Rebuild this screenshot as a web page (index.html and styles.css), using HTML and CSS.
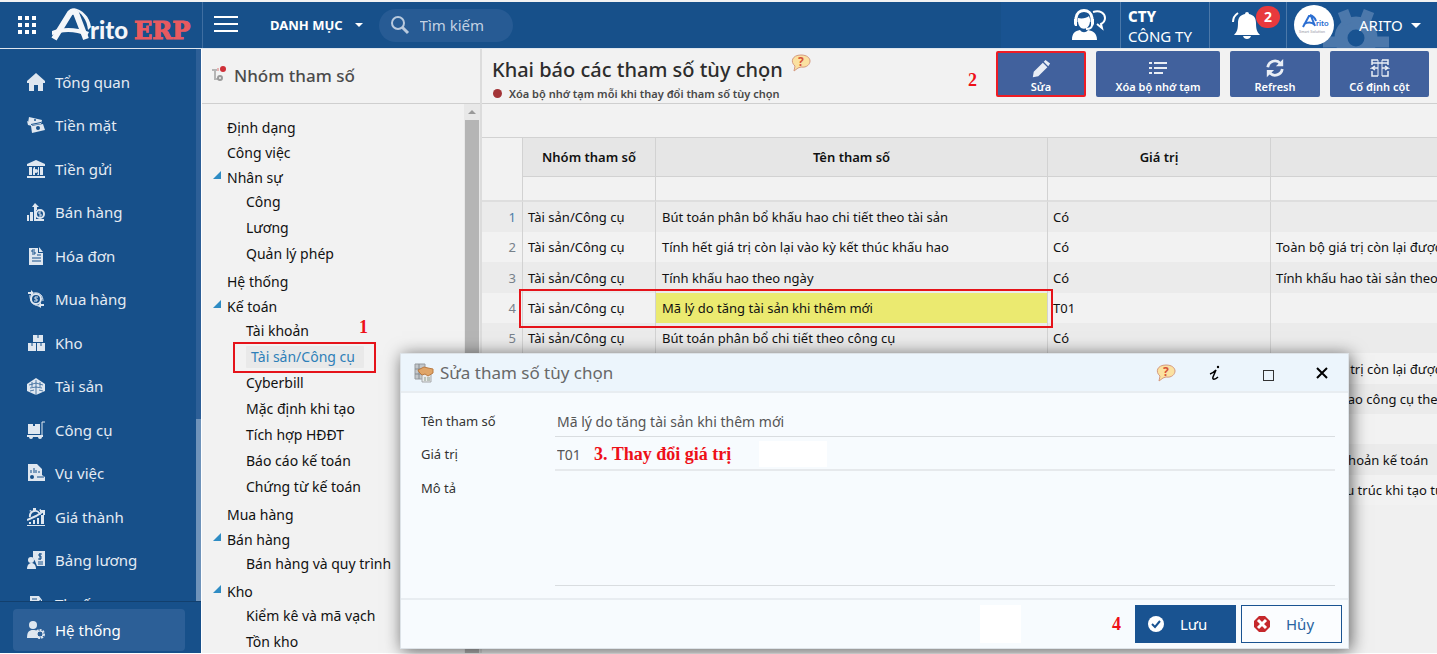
FILE: index.html
```html
<!DOCTYPE html>
<html lang="vi">
<head>
<meta charset="utf-8">
<meta name="viewport" content="width=device-width, initial-scale=1">
<title>Arito ERP</title>
<link rel="stylesheet" href="styles.css">
</head>
<body>
<div class="app">
  <header class="topbar">
    <div class="brand">
      <button class="icon-btn" aria-label="Ứng dụng">
        <svg width="20" height="20" viewBox="0 0 20 20" fill="#fff"><path d="M1 1h4v4H1zM8 1h4v4H8zM15 1h4v4h-4zM1 8h4v4H1zM8 8h4v4H8zM15 8h4v4h-4zM1 15h4v4H1zM8 15h4v4H8zM15 15h4v4h-4z"/></svg>
      </button>
      <svg class="logo" width="142" height="36" viewBox="0 0 142 36" role="img" aria-label="Arito ERP">
        <path d="M3 32L19 6q3-3 6 0l10 26" fill="none" stroke="#f4f6f9" stroke-width="6"/>
        <path d="M1 24c10-4 24-4 37 1l-2 4c-12-5-24-5-35-1zM22 1c9 1 17 9 18 19l-3 3C36 13 31 6 22 1z" fill="#f4f6f9"/>
        <text x="39" y="32" class="logo-rito">rito</text>
        <text x="83" y="32" class="logo-erp">ERP</text>
      </svg>
    </div>
    <button class="icon-btn burger" aria-label="Thu gọn menu">
      <svg width="26" height="20" viewBox="0 0 26 20" stroke="#fff" stroke-width="2"><path d="M1 2h24M1 9h24M1 16h24"/></svg>
    </button>
    <button class="menu-btn">DANH MỤC <span class="caret"></span></button>
    <label class="search">
      <svg width="20" height="20" viewBox="0 0 20 20" fill="none" stroke="#b9cade" stroke-width="2"><circle cx="8" cy="8" r="6"/><path d="M12 12l6 6" stroke-width="3"/></svg>
      <input type="text" placeholder="Tìm kiếm" aria-label="Tìm kiếm">
    </label>
    <div class="top-right">
      <button class="top-cell support" aria-label="Hỗ trợ">
        <svg width="36" height="32" viewBox="0 0 36 32"><path d="M22 3c7-2 12 1 12 6 0 3-2 5-4 6l1 4-5-4" fill="none" stroke="#fff" stroke-width="2"/><path d="M5 13V9C6-1 20-1 21 9v4" fill="none" stroke="#fff" stroke-width="3"/><path d="M3 10h3v7H4l-1-2zM20 10h3v5l-1 2h-2z" fill="#fff"/><path d="M7 9c4 1 9 0 11-2l1 3c1 13-13 13-12 0z" fill="#fff"/><path d="M21 16c0 3-3 4-6 4" fill="none" stroke="#fff" stroke-width="2"/><path d="M1 31c0-7 3-9 8-10 2 3 6 3 8 0 5 1 9 3 9 10z" fill="#fff"/></svg>
      </button>
      <button class="top-cell company"><b>CTY</b><span>CÔNG TY</span></button>
      <button class="top-cell bell" aria-label="Thông báo">
        <svg width="30" height="32" viewBox="0 0 30 32" fill="#fff"><path d="M15 3a2 2 0 0 1 2 2c5 1 7 4 7 9 0 6 1 9 4 12H2c3-3 4-6 4-12 0-5 2-8 7-9a2 2 0 0 1 2-2zM11 27h8c-1 4-7 4-8 0z"/><path d="M1 13c0-4 2-7 5-9" fill="none" stroke="#fff" stroke-width="2"/></svg>
        <span class="badge">2</span>
      </button>
      <button class="top-cell account">
        <svg class="gear" width="68" height="40" viewBox="0 0 68 40"><g fill="none" stroke="#4c78ab"><circle cx="33" cy="30" r="15" stroke-width="13"/><path d="M20 3l5 13M46 3l-5 13M0 34h14M52 34h14" stroke-width="11"/></g></svg>
        <svg class="avatar" width="40" height="40" viewBox="0 0 40 40"><circle cx="20" cy="20" r="20" fill="#fff"/><path d="M9 22l6-11h2l4 10M10 19c4-2 8-2 11 1M16 10c3 1 5 3 6 6" stroke="#2c6fd2" stroke-width="2" fill="none"/><text x="22" y="21" class="avatar-name">rito</text><text x="5" y="28" class="avatar-tag">Smart Solution</text></svg>
        <span class="account-name">ARITO</span><span class="caret caret-lg"></span>
      </button>
    </div>
  </header>

  <div class="body">
    <aside class="sidebar">
      <nav class="side-scroll">
        <a class="side-item" href="#"><svg viewBox="0 0 18 18"><path d="M9 0l9 8v2h-2v8h-5v-6H7v6H2v-8H0V8z"/></svg>Tổng quan</a>
        <a class="side-item" href="#"><svg viewBox="0 0 18 18"><path d="M2 1l13 3-1 4-9 1-4-2z"/><path d="M0 5l4 2 2-1-1 4-4-1zM4 10l12-2 2 6-13 3z"/><g fill="#17508a"><circle cx="8" cy="4" r="1"/><circle cx="11" cy="12" r="2"/><path d="M4 8l10-2v1L4 9z"/></g></svg>Tiền mặt</a>
        <a class="side-item" href="#"><svg viewBox="0 0 18 18"><path d="M9 0l9 4v2H0V4zM2 7h3v8H2zM13 7h3v8h-3zM0 16h18v2H0zM7 7h1v8H6V9zM11 7h1v8h-2l1-2z"/><circle cx="9" cy="11" r="2"/></svg>Tiền gửi</a>
        <a class="side-item" href="#"><svg viewBox="0 0 18 18"><path d="M0 12h2v6H0zM3 9h3v9H3zM7 6h2v12H7zM8 0l4 4h-2v3H7V4H5z"/><circle cx="13" cy="11" r="4" class="ln"/><path d="M14 9h-2v2h2v2h-2" class="ln1"/><path d="M9 16h8v2H9z"/></svg>Bán hàng</a>
        <a class="side-item" href="#"><svg viewBox="0 0 18 18"><path d="M2 1h9v5h5v12H2zM12 0l4 5h-4z"/><path d="M8 3H5v2h3v2H5M10 8h4M5 11h9M5 14h9" fill="none" stroke="#17508a"/></svg>Hóa đơn</a>
        <a class="side-item" href="#"><svg viewBox="0 0 18 18"><circle cx="9" cy="9" r="5" class="ln"/><path d="M11 7H8v2h2v2H7" class="ln1"/><path d="M1 2h3V0l3 3-3 3V4H1zM17 14h-3v-2l-3 4 3 2v-2h3z"/><path d="M3 5c0 6 2 10 9 11M7 3c6-1 9 3 9 8" class="ln1"/></svg>Mua hàng</a>
        <a class="side-item" href="#"><svg viewBox="0 0 18 18"><path d="M6 1h10v7H6zM1 9h8v8H1zM10 9h8v8h-8z"/><path d="M11 1v3M5 9v3M14 9v3" stroke="#17508a"/></svg>Kho</a>
        <a class="side-item" href="#"><svg viewBox="0 0 18 18"><path d="M9 1l6 4 3 2v7l-9 4-9-4V7l3-2z"/><path d="M2 8l7-2 7 2M3 11l6-1 6 1M9 3v15M3 14l4-1M12 13l4 1M5 5v5M13 5v5" fill="none" stroke="#17508a" stroke-opacity=".7"/></svg>Tài sản</a>
        <a class="side-item" href="#"><svg viewBox="0 0 18 18"><path d="M1 3h5v2h2V3h5v10H1zM0 14h16v2H0z"/><path d="M18 1h-3v14" class="ln1"/><circle cx="4" cy="16" r="2"/><circle cx="13" cy="16" r="2"/></svg>Công cụ</a>
        <a class="side-item" href="#"><svg viewBox="0 0 18 18"><path d="M1 0h9l5 5v6l3 2v4H1z"/><path d="M4 9V6M7 9V4M9 9V6M12 9V7M10 13h7" stroke="#17508a"/><circle cx="5" cy="13" r="2" fill="#17508a"/></svg>Vụ việc</a>
        <a class="side-item" href="#"><svg viewBox="0 0 18 18"><path d="M2 14h2v2H2zM6 12h2v4H6zM10 10h2v6h-2zM14 7h3v9h-3zM0 17h18v1H0z"/><path d="M3 9a5 5 0 0 1 10-2M0 12l9-4 8-5M13 3h4v4" class="ln"/><path d="M6 0h3v3H6zM2 3l2-1 1 2zM12 2l2-1v3z"/></svg>Giá thành</a>
        <a class="side-item" href="#"><svg viewBox="0 0 18 18"><path d="M6 0h12v15h-8l-2-5-2-3z"/><circle cx="4" cy="9" r="3"/><path d="M0 18c0-8 9-8 9 0z"/><path d="M13 2v7M15 3h-3v2h2v3h-3M11 11h5M11 13h5" fill="none" stroke="#17508a"/></svg>Bảng lương</a>
        <a class="side-item" href="#"><svg viewBox="0 0 18 18"><path d="M3 1h9l3 4v12H3z"/><path d="M5 4h5M5 7h3M8 9l6-4" stroke="#17508a"/></svg>Thuế</a>
        <span class="side-track"><span class="side-thumb"></span></span>
      </nav>
      <div class="side-footer">
        <a class="side-item side-active" href="#"><svg viewBox="0 0 18 18"><circle cx="6" cy="4" r="4"/><path d="M0 17c0-6 2-8 6-8s5 1 6 3v5z"/><circle cx="13" cy="13" r="3" class="ln-gear"/><circle cx="13" cy="13" r="4" fill="none" stroke="#dfe7f0" stroke-width="2" stroke-dasharray="2 1"/></svg>Hệ thống</a>
      </div>
    </aside>

    <section class="tree-panel">
      <h2 class="tree-title">
        <svg width="18" height="18" viewBox="0 0 18 18"><path d="M1 4h5M4 4v9h4" fill="none" stroke="#b5b5b5" stroke-width="2"/><circle cx="9" cy="12" r="2" fill="none" stroke="#999" stroke-width="2"/><circle cx="12" cy="3" r="3" fill="#cf3038"/><path d="M7 2v3" stroke="#d77"/></svg>
        Nhóm tham số
      </h2>
      <div class="tree-body">
        <ul class="tree">
          <li><a href="#">Định dạng</a></li>
          <li><a href="#">Công việc</a></li>
          <li class="open"><a href="#">Nhân sự</a>
            <ul><li><a href="#">Công</a></li><li><a href="#">Lương</a></li><li><a href="#">Quản lý phép</a></li></ul></li>
          <li><a href="#">Hệ thống</a></li>
          <li class="open"><a href="#">Kế toán</a>
            <ul><li><a href="#">Tài khoản</a></li>
              <li class="picked"><a href="#">Tài sản/Công cụ</a><span class="mark mark-tree"></span><span class="step step-1">1</span></li>
              <li><a href="#">Cyberbill</a></li><li><a href="#">Mặc định khi tạo</a></li><li><a href="#">Tích hợp HĐĐT</a></li><li><a href="#">Báo cáo kế toán</a></li><li><a href="#">Chứng từ kế toán</a></li></ul></li>
          <li><a href="#">Mua hàng</a></li>
          <li class="open"><a href="#">Bán hàng</a>
            <ul><li><a href="#">Bán hàng và quy trình</a></li></ul></li>
          <li class="open"><a href="#">Kho</a>
            <ul><li><a href="#">Kiểm kê và mã vạch</a></li><li><a href="#">Tồn kho</a></li></ul></li>
        </ul>
        <div class="tree-bar"><span class="tree-up"></span><span class="tree-thumb"></span></div>
      </div>
    </section>

    <main class="main">
      <div class="main-head">
        <div class="heading">
          <h1>Khai báo các tham số tùy chọn
            <svg width="21" height="18" viewBox="0 0 21 18"><path d="M10 1c6 0 9 3 9 6s-3 7-9 6l-3 1-4 3 1-5C-1 8 1 1 10 1z" fill="#fbe1a0" stroke="#d59a80"/><text x="7" y="12" class="q">?</text></svg>
          </h1>
          <p><span class="dot"></span>Xóa bộ nhớ tạm mỗi khi thay đổi tham số tùy chọn</p>
        </div>
        <div class="actions">
          <span class="step">2</span>
          <button class="act act-edit"><svg width="20" height="20" viewBox="0 0 22 22" fill="#e9eef5"><path d="M2 20l1-6L13 4l5 5L8 19zM14 3l2-2 5 4-2 3z"/></svg>Sửa</button>
          <button class="act act-clear"><svg width="20" height="20" viewBox="0 0 20 20" stroke="#e9eef5" stroke-width="2"><path d="M1 4h3M6 4h13M1 9h3M6 9h13M1 14h3M6 14h9"/></svg>Xóa bộ nhớ tạm</button>
          <button class="act act-refresh"><svg width="20" height="20" viewBox="0 0 22 22" fill="none" stroke="#e9eef5" stroke-width="3"><path d="M3 9a8 8 0 0 1 14-4M19 11a8 8 0 0 1-14 4"/><path d="M20 0v8h-8zM2 20v-8h8z" fill="#e9eef5" stroke="none"/></svg>Refresh</button>
          <button class="act act-pin"><svg width="20" height="20" viewBox="0 0 20 20" fill="none" stroke="#e9eef5"><path d="M8 1H2v5M2 12v5h6M12 1h6v5M18 12v5h-6M2 4h16" stroke-width="1.500"/><path d="M8 1v16M12 1v16"/><path d="M8 9H2l3-2M2 9l3 2M12 9h6l-3-2M18 9l-3 2" stroke-width="1.500"/></svg>Cố định cột</button>
        </div>
      </div>
      <div class="grid-toolbar"></div>
      <div class="grid-wrap">
        <table class="grid">
          <colgroup><col class="c-no"><col class="c-group"><col class="c-name"><col class="c-value"><col></colgroup>
          <thead>
            <tr><th rowspan="2" class="corner"></th><th>Nhóm tham số</th><th>Tên tham số</th><th>Giá trị</th><th></th></tr>
            <tr class="filter"><td></td><td></td><td></td><td></td></tr>
          </thead>
          <tbody>
            <tr><td>1</td><td>Tài sản/Công cụ</td><td>Bút toán phân bổ khấu hao chi tiết theo tài sản</td><td>Có</td><td></td></tr>
            <tr><td>2</td><td>Tài sản/Công cụ</td><td>Tính hết giá trị còn lại vào kỳ kết thúc khấu hao</td><td>Có</td><td>Toàn bộ giá trị còn lại được</td></tr>
            <tr><td>3</td><td>Tài sản/Công cụ</td><td>Tính khấu hao theo ngày</td><td>Có</td><td>Tính khấu hao tài sản theo</td></tr>
            <tr><td>4</td><td>Tài sản/Công cụ<span class="mark mark-row"></span></td><td class="selected">Mã lý do tăng tài sản khi thêm mới</td><td>T01</td><td></td></tr>
            <tr><td>5</td><td>Tài sản/Công cụ</td><td>Bút toán phân bổ chi tiết theo công cụ</td><td>Có</td><td></td></tr>
            <tr><td></td><td></td><td></td><td></td><td>Toàn bộ giá trị còn lại được</td></tr>
            <tr><td></td><td></td><td></td><td></td><td>Tính khấu hao công cụ theo</td></tr>
            <tr><td></td><td></td><td></td><td></td><td></td></tr>
            <tr><td></td><td></td><td></td><td></td><td>Chi tiết tài khoản kế toán</td></tr>
            <tr><td></td><td></td><td></td><td></td><td>Khai báo cấu trúc khi tạo tự</td></tr>
          </tbody>
        </table>
      </div>
    </main>
  </div>

  <section class="dialog" role="dialog" aria-labelledby="dlg-title">
    <header class="dlg-head">
      <svg width="20" height="20" viewBox="0 0 20 20"><path d="M1 1h10v15H1z" fill="#c3c7ca" stroke="#969a9e"/><path d="M1 6h10M1 11h10M5 1v15" stroke="#858b90"/><path d="M8 9h9v10H8z" fill="#e9eaea" stroke="#a5a8aa"/><path d="M4 7l6-3 4 1 5 1v4l-5 3-3-2-3 1-3-3z" fill="#e0a567" stroke="#b97a42"/><path d="M10 15h2M13 15h3M10 17h2M13 17h3" stroke="#8b9a8b"/></svg>
      <h2 id="dlg-title">Sửa tham số tùy chọn</h2>
      <div class="dlg-tools">
        <button aria-label="Trợ giúp"><svg width="21" height="18" viewBox="0 0 21 18"><path d="M10 1c6 0 9 3 9 6s-3 7-9 6l-3 1-4 3 1-5C-1 8 1 1 10 1z" fill="#fbe1a0" stroke="#d59a80"/><text x="7" y="12" class="q">?</text></svg></button>
        <button aria-label="Thông tin"><svg width="14" height="18" viewBox="0 0 14 18"><path d="M3 10c3-1 5-3 6-4L6 13c-1 3 2 3 5 0" fill="none" stroke="#000" stroke-width="1.500"/><circle cx="11" cy="3" r="1.200" fill="#000"/></svg></button>
        <button aria-label="Phóng to"><svg width="14" height="18" viewBox="0 0 14 18"><rect x="2.500" y="6.500" width="10" height="10" fill="none" stroke="#333"/></svg></button>
        <button aria-label="Đóng"><svg width="14" height="14" viewBox="0 0 14 14"><path d="M2 2l10 10M12 2L2 12" stroke="#000" stroke-width="2"/></svg></button>
      </div>
    </header>
    <form class="dlg-form">
      <label for="f-name">Tên tham số</label>
      <input id="f-name" type="text" value="Mã lý do tăng tài sản khi thêm mới">
      <label for="f-value">Giá trị</label>
      <div class="field"><input id="f-value" type="text" value="T01"><span class="step step-3">3. Thay đổi giá trị</span><span class="blank"></span></div>
      <label for="f-desc">Mô tả</label>
      <textarea id="f-desc" rows="5"></textarea>
    </form>
    <footer class="dlg-foot">
      <span class="foot-blank"></span>
      <span class="step">4</span>
      <button class="btn btn-save"><svg width="16" height="16" viewBox="0 0 16 16"><circle cx="8" cy="8" r="8" fill="#fff"/><path d="M4 8l3 3 5-6" fill="none" stroke="#195391" stroke-width="2"/></svg>Lưu</button>
      <button class="btn btn-cancel"><svg width="16" height="16" viewBox="0 0 16 16"><path d="M5 0h6l5 5v6l-5 5H5l-5-5V5z" fill="#c5282c"/><path d="M4 4l8 8M12 4l-8 8" stroke="#fff" stroke-width="3"/></svg>Hủy</button>
    </footer>
  </section>
</div>
</body>
</html>
```
FILE: styles.css
```css
* { box-sizing: border-box; }
html, body { height: 100%; }
body {
  margin: 0;
  font-family: "Noto Sans", "Open Sans", sans-serif;
  font-size: 13px;
  color: #111;
  background: #f2f2f2;
  overflow: hidden;
}
button, input, textarea { font: inherit; color: inherit; }
button { border: 0; background: none; padding: 0; cursor: pointer; }
a { color: inherit; text-decoration: none; }
h1, h2, p, ul { margin: 0; padding: 0; }
ul { list-style: none; }
svg { flex: none; }

.app {
  position: relative;
  display: flex;
  flex-direction: column;
  height: 100%;
  padding-top: 2px;
  border-bottom: 1px solid #fff;
}

/* Top bar */
.topbar {
  display: flex;
  align-items: stretch;
  flex: none;
  height: 47px;
  background: #17508a;
  border-bottom: 1px solid #dfe6ee;
  color: #fff;
}
.brand {
  display: flex;
  align-items: center;
  gap: 14px;
  width: 203px;
  padding-left: 17px;
  border-right: 1px solid #3f6ea1;
}
.icon-btn { display: flex; align-items: center; }
.burger { margin-left: 10px; }
.logo { overflow: visible; }
.logo-rito { font: 900 24px "Lato", sans-serif; fill: #f4f6f9; }
.logo-erp { font: bold 24px "DejaVu Serif", serif; fill: #e85a60; stroke: #e85a60; }
.menu-btn {
  display: flex;
  align-items: center;
  gap: 12px;
  margin-left: 31px;
  font-size: 13px;
  font-weight: 700;
}
.caret {
  border: 4px solid transparent;
  border-top-color: currentColor;
  border-bottom: 0;
}
.caret-lg { position: relative; border-width: 5px; border-bottom: 0; }
.search {
  display: flex;
  align-items: center;
  gap: 10px;
  align-self: center;
  width: 134px;
  height: 33px;
  margin-left: 16px;
  padding-left: 11px;
  border-radius: 17px;
  background: #275b94;
}
.search input {
  width: 84px;
  padding: 0;
  border: 0;
  outline: 0;
  background: none;
  font-size: 15px;
}
.search input::placeholder { color: #c3d2e3; opacity: 1; }
.top-right { display: flex; margin-left: auto; background: #195391; }
.top-cell {
  position: relative;
  display: flex;
  align-items: center;
  border-left: 1px solid #4b78a9;
}
.support { border-left: 0; padding: 0 13px 0 70px; }
.company {
  flex-direction: column;
  align-items: flex-start;
  justify-content: center;
  width: 89px;
  padding: 2px 0 0 7px;
  font-size: 15px;
  line-height: 20px;
}
.company b { font-weight: 800; }
.bell { width: 77px; padding-left: 22px; }
.badge {
  position: absolute;
  top: 4px;
  right: 6px;
  width: 24px;
  height: 22px;
  border-radius: 12px;
  background: #e8393d;
  font-size: 14px;
  font-weight: 700;
  line-height: 22px;
}
.account { width: 151px; padding-left: 7px; gap: 8px; overflow: hidden; }
.gear { position: absolute; left: 36px; bottom: 0; }
.avatar { position: relative; }
.avatar-name { font: bold 8px "Lato", sans-serif; fill: #2c6fd2; }
.avatar-tag { font: 4px "Lato", sans-serif; fill: #99a; }
.account-name { position: relative; margin-left: 17px; font-size: 15px; }

/* Body columns */
.body { display: flex; flex: 1; min-height: 0; }

/* Sidebar */
.sidebar {
  display: flex;
  flex-direction: column;
  flex: none;
  width: 201px;
  background: #17508a;
  color: #e4ebf3;
}
.side-scroll { position: relative; flex: 1; min-height: 0; padding-top: 11px; overflow: hidden; }
.side-item {
  display: flex;
  align-items: center;
  gap: 10px;
  height: 43px;
  padding-left: 27px;
  font-size: 15px;
}
.side-item:nth-child(even) { height: 44px; }
.side-item svg { width: 18px; height: 18px; fill: #dfe7f0; }
.side-item .ln { fill: none; stroke: #dfe7f0; stroke-width: 2; }
.side-item .ln1 { fill: none; stroke: #dfe7f0; }
.side-item .ln-gear { fill: #2c5f97; stroke: #dfe7f0; }
.side-track {
  position: absolute;
  top: 0;
  right: 0;
  bottom: 0;
  display: flex;
  align-items: flex-end;
  width: 5px;
  background: #2d5f97;
}
.side-thumb { width: 5px; height: 33%; background: #6f93ba; }
.side-footer { flex: none; padding: 7px 16px 2px 13px; border-top: 1px solid #123f6d; }
.side-active {
  height: 42px;
  padding-left: 14px;
  border-radius: 4px;
  background: #2c5f97;
  color: #fff;
}

/* Parameter group tree */
.tree-panel {
  display: flex;
  flex-direction: column;
  flex: none;
  width: 281px;
  border-left: 1px solid #fff;
  border-right: 2px solid #dcdcdc;
}
.tree-title {
  display: flex;
  align-items: center;
  flex: none;
  gap: 5px;
  height: 55px;
  padding: 0 0 2px 9px;
  border-bottom: 1px solid #cfcfcf;
  font-size: 17px;
  font-weight: 500;
  color: #4b4b4b;
}
.tree-body { display: flex; flex: 1; min-height: 0; overflow: hidden; }
.tree { flex: 1; padding: 11px 0 0 25px; font-size: 14px; }
.tree a { line-height: 25px; display: block; }
.tree ul { margin: -1px 0 2px; padding-left: 19px; }
.tree ul a { line-height: 26px; }
.tree li { position: relative; }
.open::before {
  content: "";
  position: absolute;
  left: -14px;
  top: 6px;
  border-left: 8px solid transparent;
  border-bottom: 8px solid #2e8cc4;
}
.picked a {
  width: 118px;
  padding-left: 5px;
  border-radius: 4px;
  background: linear-gradient(#e9e9e9, #e9e9e9) center / 100% 22px no-repeat;
  color: #2e7fb8;
}
.tree-bar { display: flex; flex-direction: column; align-items: center; width: 16px; background: #e8e8e8; }
.tree-up { margin: 6px 0; border: 4px solid transparent; border-top: 0; border-bottom-color: #999; }
.tree-thumb { flex: 1; width: 14px; background: #b5b5b5; }

/* Main area */
.main { flex: 1; min-width: 0; background: #f0f0f0; }
.main-head {
  display: flex;
  justify-content: space-between;
  height: 55px;
  padding: 0 8px 0 10px;
  border-bottom: 1px solid #cfcfcf;
  background: #f2f2f2;
}
.heading { white-space: nowrap; }
.heading h1 {
  display: flex;
  gap: 8px;
  padding-top: 5px;
  font-size: 20px;
  font-weight: 500;
  line-height: 32px;
  color: #2d2d2d;
}
.q { font: bold 12px "Noto Sans", sans-serif; fill: #d65238; }
.heading p { display: flex; align-items: center; gap: 7px; font-size: 11px; font-weight: 600; line-height: 15px; color: #484848; }
.dot { width: 9px; height: 9px; margin-left: 1px; border-radius: 50%; background: #a33437; }
.actions { display: flex; align-items: center; gap: 10px; padding-bottom: 4px; }
.actions .step { margin: 12px 9px 0 0; }
.act {
  display: flex;
  flex-direction: column;
  align-items: center;
  justify-content: flex-end;
  height: 46px;
  border: 2px solid #41619d;
  border-radius: 2px;
  background: #41619d;
  color: #fff;
  font-size: 11px;
  font-weight: 600;
  line-height: 16px;
}
.act-edit { width: 90px; border-color: #ee1c24; }
.act-clear { width: 124px; }
.act-refresh { width: 90px; }
.act-pin { width: 99px; }

.grid-toolbar { height: 33px; background: #f2f2f2; }
.grid-wrap { overflow: hidden; }
.grid { width: 100%; table-layout: fixed; border-collapse: separate; border-spacing: 0; background: #f2f2f2; }
.c-no { width: 41px; }
.c-group { width: 133px; }
.c-name { width: 392px; }
.c-value { width: 223px; }
.grid th, .grid td { padding: 0 5px; border-right: 1px solid #d2d2d2; white-space: nowrap; text-align: left; }
.grid thead th { height: 40px; border-top: 1px solid #d2d2d2; border-bottom: 1px solid #d2d2d2; background: #e6e6e6; font-size: 13px; font-weight: 600; text-align: center; }
.grid thead .corner { background: #f2f2f2; border-bottom: 2px solid #dedede; }
.grid .filter td { height: 25px; border-bottom: 2px solid #dedede; }
.grid tbody td { position: relative; height: 30px; font-size: 13px; }
.grid tbody td:nth-child(3) { padding-left: 6px; }
.grid tbody tr:nth-child(3n) td { height: 31px; }
.grid tbody tr:nth-child(odd) { background: #ebebeb; }
.grid tbody td:first-child { padding-right: 6px; text-align: right; color: #77818a; }
.grid tbody tr:first-child td:first-child { color: #4b7da8; }
.grid tbody .selected { background: #ebea70; }
.grid tr > :last-child { padding-right: 0; border-right: 0; overflow: hidden; }

/* Guide marks */
.mark { position: absolute; z-index: 2; border: 2px solid #e5131a; pointer-events: none; }
.mark-tree { left: -13px; top: -2px; width: 143px; height: 31px; }
.mark-row { left: -4px; top: -4px; width: 534px; height: 39px; }
.step { font: bold 18px "Liberation Serif", serif; color: #ee1018; }
.step-1 { position: absolute; left: 113px; top: -27px; }

/* Edit dialog */
.dialog {
  position: absolute;
  z-index: 5;
  top: 353px;
  left: 400px;
  right: 88px;
  border: 1px solid #dde3e8;
  background: #f7fbfe;
  box-shadow: 2px 2px 16px rgba(0, 0, 0, .6);
}
.dlg-head {
  display: flex;
  align-items: center;
  gap: 6px;
  height: 39px;
  padding: 0 19px 0 13px;
  border-bottom: 2px solid #e8edf1;
  background: #ecf5fc;
}
.dlg-head h2 { font-size: 17px; font-weight: 400; color: #686868; }
.dlg-tools { display: flex; align-items: center; gap: 40px; margin-left: auto; }
.dlg-tools button { display: flex; }
.dlg-tools button:first-child { margin-right: -10px; }
.dlg-form {
  display: grid;
  grid-template-columns: 134px 1fr;
  row-gap: 2px;
  padding: 13px 13px 12px 20px;
}
.dlg-form label { font-size: 13px; line-height: 31px; color: #333; }
.dlg-form input, .dlg-form textarea {
  height: 31px;
  padding: 0 2px;
  border: 0;
  outline: 0;
  border-bottom: 1px solid #d9dde0;
  border-radius: 0;
  background: none;
  color: #555;
  font-size: 14px;
}
.dlg-form textarea { height: 113px; resize: none; }
.field { display: flex; align-items: center; height: 32px; border-bottom: 2px solid #e6e9ec; }
.field input { width: 38px; border: 0; }
.step-3 { margin-left: 1px; }
.blank { width: 68px; height: 26px; margin-left: 28px; background: #fff; }
.dlg-foot {
  display: flex;
  align-items: center;
  justify-content: flex-end;
  gap: 5px;
  padding: 5px 6px;
  border-top: 2px solid #e8edf1;
}
.dlg-foot .step { margin: 0 9px 0 86px; }
.foot-blank { align-self: stretch; width: 41px; background: #fff; }
.btn {
  display: flex;
  align-items: center;
  gap: 16px;
  width: 101px;
  height: 38px;
  padding-left: 12px;
  border: 1px solid #195391;
  font-size: 15px;
}
.btn-save { background: #195391; color: #fff; }
.btn-cancel { background: #fbfdff; color: #2a64a0; }
```
